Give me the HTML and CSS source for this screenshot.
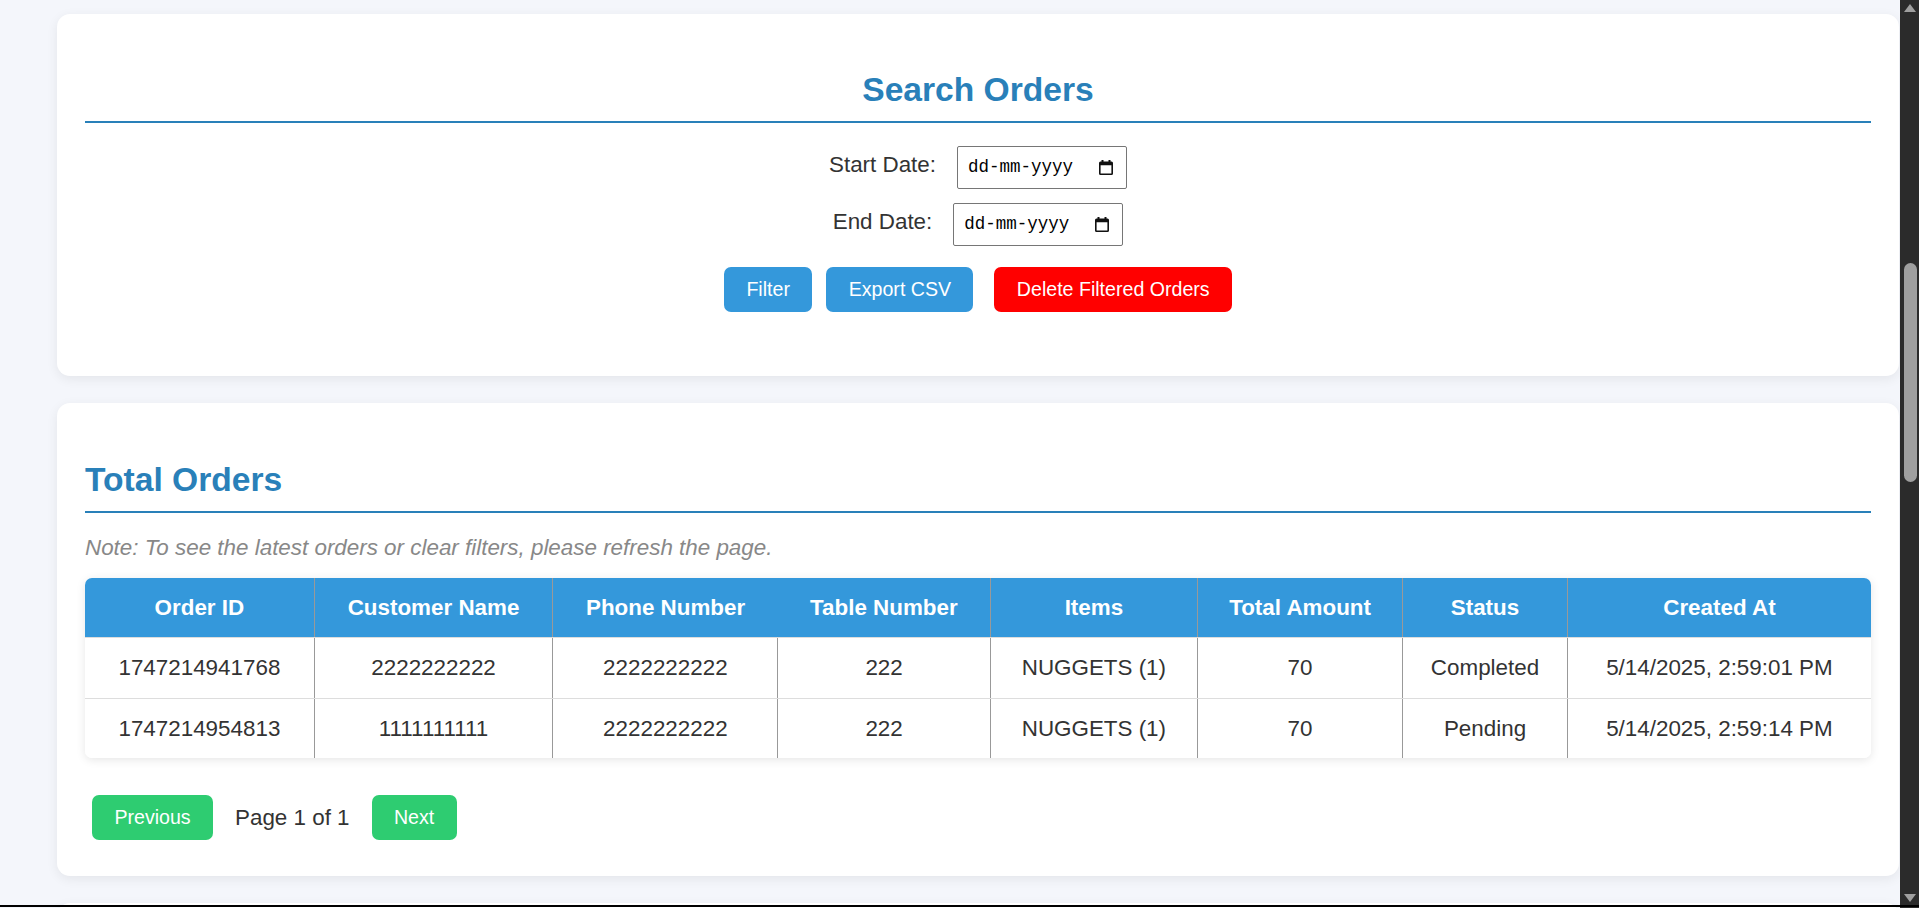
FILE: index.html
```html
<!DOCTYPE html>
<html lang="en">
<head>
<meta charset="utf-8">
<title>Orders</title>
<link rel="stylesheet" href="styles.css">
</head>
<body>
<main class="page">
  <section class="card search-card">
    <h2 class="card-title centered">Search Orders</h2>
    <form class="filter-form">
      <div class="field-row">
        <label class="field-label">Start Date:</label>
        <div class="date-input">
          <span class="date-text">dd-mm-yyyy</span>
          <svg class="cal-icon" width="14" height="15" viewBox="0 0 14 15"><path fill-rule="evenodd" d="M2.5 0h2v1.5h5V0h2v1.5h1A1.5 1.5 0 0 1 14 3v10.5A1.5 1.5 0 0 1 12.5 15h-11A1.5 1.5 0 0 1 0 13.5V3a1.5 1.5 0 0 1 1.5-1.5h1zM1.6 5.2v8.2h10.8V5.2z"/></svg>
        </div>
      </div>
      <div class="field-row second">
        <label class="field-label">End Date:</label>
        <div class="date-input">
          <span class="date-text">dd-mm-yyyy</span>
          <svg class="cal-icon" width="14" height="15" viewBox="0 0 14 15"><path fill-rule="evenodd" d="M2.5 0h2v1.5h5V0h2v1.5h1A1.5 1.5 0 0 1 14 3v10.5A1.5 1.5 0 0 1 12.5 15h-11A1.5 1.5 0 0 1 0 13.5V3a1.5 1.5 0 0 1 1.5-1.5h1zM1.6 5.2v8.2h10.8V5.2z"/></svg>
        </div>
      </div>
      <div class="btn-row">
        <button type="button" class="btn btn-blue btn-filter">Filter</button>
        <button type="button" class="btn btn-blue">Export CSV</button>
        <button type="button" class="btn btn-red btn-delete">Delete Filtered Orders</button>
      </div>
    </form>
  </section>

  <section class="card orders-card">
    <h2 class="card-title">Total Orders</h2>
    <p class="note">Note: To see the latest orders or clear filters, please refresh the page.</p>
    <div class="table-wrap">
      <table class="orders">
        <colgroup>
          <col class="c1"><col class="c2"><col class="c3"><col class="c4"><col class="c5"><col class="c6"><col class="c7"><col class="c8">
        </colgroup>
        <thead>
          <tr>
            <th>Order ID</th>
            <th>Customer Name</th>
            <th class="no-sep">Phone Number</th>
            <th>Table Number</th>
            <th>Items</th>
            <th>Total Amount</th>
            <th>Status</th>
            <th>Created At</th>
          </tr>
        </thead>
        <tbody>
          <tr>
            <td>1747214941768</td>
            <td>2222222222</td>
            <td>2222222222</td>
            <td>222</td>
            <td>NUGGETS (1)</td>
            <td>70</td>
            <td>Completed</td>
            <td>5/14/2025, 2:59:01 PM</td>
          </tr>
          <tr>
            <td>1747214954813</td>
            <td>1111111111</td>
            <td>2222222222</td>
            <td>222</td>
            <td>NUGGETS (1)</td>
            <td>70</td>
            <td>Pending</td>
            <td>5/14/2025, 2:59:14 PM</td>
          </tr>
        </tbody>
      </table>
    </div>
    <div class="pagination">
      <button type="button" class="btn btn-green">Previous</button>
      <span class="page-info">Page 1 of 1</span>
      <button type="button" class="btn btn-green">Next</button>
    </div>
  </section>

  <section class="card next-card"></section>
</main>

<div class="scrollbar" aria-hidden="true">
  <span class="sb-arrow sb-up"></span>
  <span class="sb-thumb"></span>
  <span class="sb-arrow sb-down"></span>
</div>
<div class="frame-edge" aria-hidden="true"></div>
</body>
</html>
```

FILE: styles.css
```css
html, body {
  margin: 0;
  padding: 0;
  height: 100%;
  overflow: hidden;
}

body {
  background: #f4f6fb;
  font-family: "Liberation Sans", Arial, sans-serif;
  color: #333;
}

.page {
  padding: 14px 0 0 57px;
}

.card {
  width: 1842px;
  box-sizing: border-box;
  background: #fff;
  border-radius: 13px;
  box-shadow: 0 3px 12px rgba(0, 0, 0, 0.07);
  padding: 28px;
  margin-bottom: 27px;
}

.card-title {
  margin: 29px 0 0;
  padding-bottom: 12px;
  border-bottom: 2px solid #2980b9;
  color: #2980b9;
  font-size: 33.6px;
  line-height: 38px;
  font-weight: bold;
}

.card-title.centered {
  text-align: center;
}

.orders-card .card-title {
  margin-top: 30px;
}

/* search form */
.filter-form {
  display: flex;
  flex-direction: column;
  align-items: center;
  margin: 0 0 36px;
}

.field-row {
  display: flex;
  align-items: center;
  justify-content: center;
  gap: 21px;
  margin-top: 23px;
}

.field-row.second {
  margin-top: 14.5px;
}

.field-label {
  font-size: 22.4px;
  line-height: 25.8px;
  color: #333;
  padding-bottom: 5px;
}

.date-input {
  box-sizing: border-box;
  width: 170px;
  height: 42.5px;
  border: 1px solid #767676;
  border-radius: 2px;
  background: #fff;
  display: flex;
  align-items: center;
  justify-content: space-between;
  padding: 0 13px 0 10px;
}

.date-text {
  font-family: "Liberation Mono", "DejaVu Sans Mono", monospace;
  font-size: 17.5px;
  color: #000;
  line-height: 20px;
}

.cal-icon {
  display: block;
  fill: #111;
}

.btn-row {
  display: flex;
  justify-content: center;
  margin-top: 21.5px;
}

.btn {
  font-family: "Liberation Sans", Arial, sans-serif;
  font-size: 19.6px;
  line-height: 22.6px;
  padding: 11.2px 22.4px;
  border: none;
  border-radius: 7px;
  color: #fff;
  cursor: pointer;
}

.btn-blue { background: #3498db; }
.btn-red { background: #ff0000; }
.btn-green { background: #2ecc71; }

.btn-filter { margin-right: 14px; }
.btn-delete { margin-left: 21px; }

/* orders */
.note {
  margin: 22.4px 0 16.8px;
  font-size: 22.4px;
  line-height: 25.8px;
  font-style: italic;
  color: #888;
}

.table-wrap {
  border-radius: 7px;
  overflow: hidden;
  box-shadow: 0 2px 10px rgba(0, 0, 0, 0.1);
}

.orders {
  width: 100%;
  border-collapse: collapse;
  table-layout: fixed;
  font-size: 22.4px;
  line-height: 25.8px;
}

.orders col.c1 { width: 229.3px; }
.orders col.c2 { width: 238.5px; }
.orders col.c3 { width: 225.1px; }
.orders col.c4 { width: 212.4px; }
.orders col.c5 { width: 207.2px; }
.orders col.c6 { width: 205.2px; }
.orders col.c7 { width: 164.7px; }

.orders th,
.orders td {
  padding: 16.8px 0;
  text-align: center;
  border-bottom: 1px solid #ddd;
  border-right: 1px solid #999;
  white-space: nowrap;
}

.orders th:last-child,
.orders td:last-child {
  border-right: none;
}

.orders th.no-sep {
  border-right: none;
}

.orders th {
  background: #3498db;
  color: #fff;
  font-weight: bold;
}

.orders td {
  background: #fff;
  color: #333;
}

.orders tbody tr:last-child td {
  border-bottom: none;
}

.pagination {
  display: flex;
  align-items: center;
  gap: 22px;
  margin: 36.8px 0 8px 7px;
}

.page-info {
  font-size: 22.4px;
  line-height: 25.8px;
  color: #333;
}

.next-card {
  height: 200px;
}

/* browser chrome overlays */
.scrollbar {
  position: fixed;
  top: 0;
  right: 0;
  width: 19px;
  height: 100%;
  background: #2b2b2b;
}

.sb-thumb {
  position: absolute;
  left: 4px;
  top: 263px;
  width: 13px;
  height: 219px;
  border-radius: 7px;
  background: #9f9f9f;
}

.sb-arrow {
  position: absolute;
  left: 4px;
  width: 0;
  height: 0;
  border-left: 6.5px solid transparent;
  border-right: 6.5px solid transparent;
}

.sb-up {
  top: 4px;
  border-bottom: 8px solid #9f9f9f;
}

.sb-down {
  bottom: 6px;
  border-top: 8px solid #9f9f9f;
}

.frame-edge {
  position: fixed;
  left: 0;
  right: 0;
  bottom: 1px;
  height: 2px;
  background: #000;
}
```
